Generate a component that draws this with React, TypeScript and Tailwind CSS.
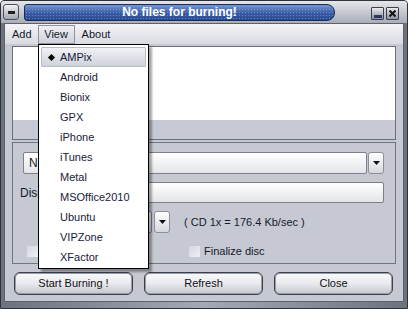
import React from "react";

const FORMATS = ["AMPix", "Android", "Bionix", "GPX", "iPhone", "iTunes", "Metal", "MSOffice2010", "Ubuntu", "VIPZone", "XFactor"];

function DropButton() {
  return (
    <div className="flex h-[22px] w-[16px] items-center justify-center rounded-[3px] border border-[#8a8e98] bg-gradient-to-b from-white to-[#d6d8de]">
      <svg width="7" height="4" viewBox="0 0 7 4">
        <path d="M0 0h7L3.5 4z" fill="#111" />
      </svg>
    </div>
  );
}

function Check() {
  return <div className="h-[11px] w-[11px] bg-gradient-to-br from-[#d4d7e2] to-[#eef0f5]" />;
}

function BigButton({ label }: { label: string }) {
  return (
    <div className="flex h-[23px] w-[119px] items-center justify-center rounded-[6px] border border-[#3b3f48] bg-gradient-to-b from-[#fafafb] via-[#e9eaee] to-[#c4c7cf] text-[11px] text-[#111] shadow-[inset_0_0_0_1px_#9a9ea8]">
      {label}
    </div>
  );
}

export default function App() {
  return (
    <div className="relative flex h-[309px] w-[408px] flex-col overflow-hidden rounded-t-[4px] border border-[#2f3239] bg-gradient-to-r from-[#6e727c] via-[#a5a9b3] to-[#6e727c] font-['Liberation_Sans',Arial,sans-serif] text-[11px] text-[#141a2c]">
      {/* title bar */}
      <div className="flex h-[22px] items-center bg-gradient-to-b from-[#e4e6eb] to-[#a9adb7]">
        <div className="ml-[2px] flex h-[16px] w-[16px] items-center justify-center rounded-[3px] border border-[#4a4e58] bg-gradient-to-b from-[#f2f3f5] to-[#a3a7b1]">
          <div className="h-[3px] w-[7px] bg-[#222]" />
        </div>
        <div className="ml-[5px] flex h-[17px] w-[311px] items-center justify-center rounded-l-[3px] rounded-r-[8px] border border-[#1e2d58] bg-[radial-gradient(circle,rgba(150,175,230,0.55)_0.7px,transparent_0.9px),linear-gradient(to_bottom,#7394d2,#3a5ca4_55%,#284a90)] bg-[length:3px_3px,100%_100%] text-[12px] font-bold text-white">
          No files for burning!
        </div>
        <div className="flex-1" />
        <div className="mr-[8px] mt-[2px] flex gap-[2px]">
          <div className="flex h-[13px] w-[13px] items-end justify-center rounded-[1px] border border-[#3b3f48] bg-gradient-to-b from-[#e8e9ed] to-[#8d919b] pb-[1px]">
            <div className="h-[3px] w-[8px] bg-[#2a3a68]" />
          </div>
          <div className="flex h-[13px] w-[13px] items-center justify-center rounded-[1px] border border-[#3b3f48] bg-gradient-to-b from-[#e8e9ed] to-[#8d919b]">
            <svg width="7" height="7" viewBox="0 0 7 7">
              <path d="M0.5 0.5l6 6M6.5 0.5l-6 6" stroke="#111" strokeWidth="2" />
            </svg>
          </div>
        </div>
      </div>

      {/* window body */}
      <div className="mx-[3px] mb-[6px] flex flex-1 flex-col border border-[#5d616b] bg-[#c6c9d2]">
        {/* menu bar */}
        <div className="flex h-[20px] items-center bg-gradient-to-b from-[#f4f4f6] to-[#d9dbe1]">
          <span className="ml-[7px]">Add</span>
          <div className="ml-[6px] flex h-[19px] w-[37px] items-center justify-center border border-[#8f939d] bg-gradient-to-b from-[#eef0f3] to-[#cfd2d9]">
            View
          </div>
          <span className="ml-[7px]">About</span>
        </div>

        {/* file list */}
        <div className="ml-[7px] mt-[2px] flex h-[94px] w-[384px] flex-col border border-[#6b6f79] bg-[#c7cad4]">
          <div className="h-[73px] bg-white" />
        </div>

        {/* options group */}
        <div className="ml-[7px] mt-[2px] flex h-[122px] w-[384px] flex-col border border-[#727682] pl-[10px]">
          <div className="mt-[9px] flex items-center">
            <div className="flex h-[22px] w-[344px] items-center whitespace-nowrap rounded-[2px] border border-[#7c808a] bg-gradient-to-b from-white to-[#e3e5e9] pl-[5px] text-[12px]">
              No burner found
            </div>
            <div className="ml-[1px]">
              <DropButton />
            </div>
          </div>
          <div className="mt-[8px] flex h-[21px] items-center">
            <span className="ml-[-3px] w-[70px] whitespace-nowrap text-[12px]">Disc label :</span>
            <div className="ml-[7px] h-[21px] w-[287px] rounded-[2px] border border-[#7c808a] bg-gradient-to-b from-white to-[#e3e5e9]" />
          </div>
          <div className="mt-[8px] flex h-[22px] items-center">
            <div className="ml-[69px] h-[22px] w-[60px] rounded-[2px] border border-[#7c808a] bg-gradient-to-b from-white to-[#e3e5e9]" />
            <div className="ml-[2px]">
              <DropButton />
            </div>
            <span className="ml-[14px] text-[11px]">( CD 1x = 176.4 Kb/sec )</span>
          </div>
          <div className="mt-[10px] flex items-center">
            <div className="ml-[4px]">
              <Check />
            </div>
            <div className="ml-[151px]">
              <Check />
            </div>
            <span className="ml-[4px]">Finalize disc</span>
          </div>
        </div>

        {/* buttons */}
        <div className="ml-[9px] mt-[8px] flex gap-[11px]">
          <BigButton label="Start Burning !" />
          <BigButton label="Refresh" />
          <BigButton label="Close" />
        </div>
      </div>

      {/* open View menu */}
      <div className="absolute left-[37px] top-[43px] flex w-[111px] flex-col border border-black bg-white pb-[1px] pt-[2px] shadow-[3px_3px_2px_rgba(0,0,0,0.35)]">
        {FORMATS.map((f, i) => (
          <div
            key={f}
            className={
              i === 0
                ? "mx-[2px] flex h-[20px] items-center rounded-[1px] border border-[#b9bcc5] bg-gradient-to-b from-[#f1f2f5] to-[#cfd2da]"
                : "mx-[2px] flex h-[20px] items-center border border-transparent"
            }
          >
            <div className="flex w-[18px] justify-center pl-[1px]">
              {i === 0 && <div className="h-[5px] w-[5px] rotate-45 bg-black" />}
            </div>
            <span className="text-[11px] text-[#17203a]">{f}</span>
          </div>
        ))}
      </div>
    </div>
  );
}
